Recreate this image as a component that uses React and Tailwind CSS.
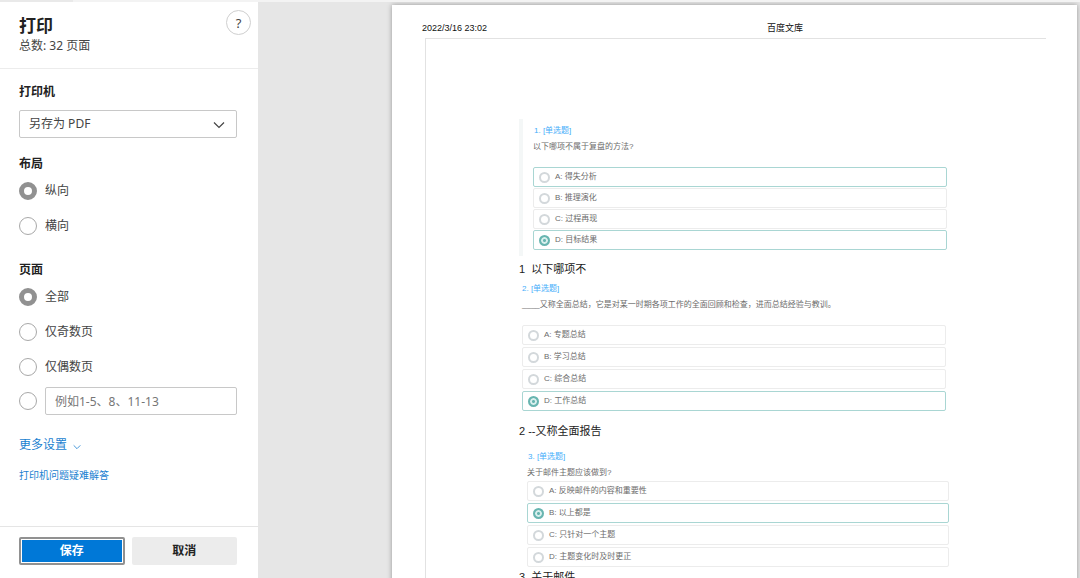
import React, { useState } from 'react';

const questions = [
  {
    id: 'q1',
    title: '1. [单选题]',
    text: '以下哪项不属于复盘的方法?',
    options: ['A: 得失分析', 'B: 推理演化', 'C: 过程再现', 'D: 目标结果'],
    answer: 3,
    outlined: [0, 3],
    box: 'border-l-4 border-[#f4f7f7] pt-1 pb-1.5 pl-[10px] pr-0.5',
    titleClass: 'pl-px',
    list: 'mt-3 gap-px',
    note: '1\u00a0 以下哪项不',
    noteClass: 'mt-[3px]',
  },
  {
    id: 'q2',
    title: '2. [单选题]',
    text: '____又称全面总结，它是对某一时期各项工作的全面回顾和检查，进而总结经验与教训。',
    options: ['A: 专题总结', 'B: 学习总结', 'C: 综合总结', 'D: 工作总结'],
    answer: 3,
    outlined: [3],
    box: 'mt-0.5 px-[3px]',
    titleClass: '',
    list: 'mt-3 gap-0.5',
    note: '2 --又称全面报告',
    noteClass: 'mt-[10px]',
  },
  {
    id: 'q3',
    title: '3. [单选题]',
    text: '关于邮件主题应该做到?',
    options: ['A: 反映邮件的内容和重要性', 'B: 以上都是', 'C: 只针对一个主题', 'D: 主题变化时及时更正'],
    answer: 1,
    outlined: [1],
    box: 'mt-2 pl-2',
    titleClass: 'pl-px',
    list: 'gap-0.5',
    note: '3\u00a0 关于邮件',
    noteClass: '',
  },
];

const pageOptions = [
  { value: 'all', label: '全部' },
  { value: 'odd', label: '仅奇数页' },
  { value: 'even', label: '仅偶数页' },
];

const radioClass =
  'size-[18px] shrink-0 appearance-none rounded-full border border-[#a8a8a8] bg-white checked:border-[5px] checked:border-[#919191]';

const Chevron = ({ className }) => (
  <svg className={className} viewBox="0 0 12 8" fill="none" stroke="currentColor" aria-hidden="true">
    <path d="M1 1.5L6 6.5L11 1.5" strokeWidth="1.2" />
  </svg>
);

const Radio = ({ name, label, checked, onChange }) => (
  <label className="flex h-[35px] items-center gap-2">
    <input type="radio" name={name} checked={checked} onChange={onChange} className={radioClass} />
    {label}
  </label>
);

const Question = ({ question }) => (
  <>
    <section className={question.box}>
      <h3 className={`text-[8px] leading-4 text-[#45aefa] ${question.titleClass}`}>{question.title}</h3>
      <p className="text-[8px] leading-4 text-[#6b6b6b]">{question.text}</p>
      <div className={`flex flex-col ${question.list}`}>
        {question.options.map((option, i) => (
          <label
            key={option}
            className={`flex h-5 items-center gap-[5px] rounded-xs border pl-[5px] text-[8px] text-[#6b6b6b] ${
              question.outlined.includes(i) ? 'border-[#a9d6d3]' : 'border-[#ececec]'
            }`}
          >
            <input
              type="radio"
              name={question.id}
              defaultChecked={i === question.answer}
              className="size-[11px] shrink-0 appearance-none rounded-full border-2 border-[#d3d8db] checked:border-[#68b5b0] checked:bg-[radial-gradient(circle,#68b5b0_1px,#d8efed_2px,#d8efed_3px,#68b5b0_4px)]"
            />
            {option}
          </label>
        ))}
      </div>
    </section>
    <p className={`text-[11px] leading-5 text-[#222222] ${question.noteClass}`}>{question.note}</p>
  </>
);

const PrintPanel = () => {
  const [layout, setLayout] = useState('portrait');
  const [pages, setPages] = useState('all');

  return (
    <aside className="flex w-[258px] shrink-0 flex-col bg-white text-xs text-[#444444]">
      <header className="flex items-start justify-between border-b border-[#ececec] pt-[14px] pr-[7px] pb-3 pl-[19px]">
        <div>
          <h1 className="text-[17px] leading-5 font-bold text-[#222222]">打印</h1>
          <p className="leading-5">总数: 32 页面</p>
        </div>
        <button
          type="button"
          aria-label="帮助"
          className="-mt-1.5 size-[25px] rounded-full border border-[#cfcfcf] text-[13px] leading-5"
        >
          ?
        </button>
      </header>

      <div className="pt-[13px] pr-[21px] pl-[19px]">
        <h2 className="leading-5 font-bold text-[#222222]">
          <label htmlFor="printer">打印机</label>
        </h2>
        <div className="relative mt-2">
          <select
            id="printer"
            className="block h-7 w-full appearance-none rounded-xs border border-[#c8c8c8] bg-white pl-[9px]"
          >
            <option>另存为 PDF</option>
          </select>
          <Chevron className="pointer-events-none absolute top-[11px] right-3 h-2 w-3" />
        </div>

        <fieldset className="mt-[17px] min-w-0">
          <legend className="leading-[18px] font-bold text-[#222222]">布局</legend>
          <Radio name="layout" label="纵向" checked={layout === 'portrait'} onChange={() => setLayout('portrait')} />
          <Radio name="layout" label="横向" checked={layout === 'landscape'} onChange={() => setLayout('landscape')} />
        </fieldset>

        <fieldset className="mt-[18px] min-w-0">
          <legend className="leading-[18px] font-bold text-[#222222]">页面</legend>
          {pageOptions.map(({ value, label }) => (
            <Radio key={value} name="pages" label={label} checked={pages === value} onChange={() => setPages(value)} />
          ))}
          <div className="flex h-[34px] items-center gap-2">
            <input
              type="radio"
              name="pages"
              aria-label="自定义页面"
              checked={pages === 'custom'}
              onChange={() => setPages('custom')}
              className={radioClass}
            />
            <input
              type="text"
              aria-label="页面范围"
              placeholder="例如1-5、8、11-13"
              onFocus={() => setPages('custom')}
              className="h-7 min-w-0 flex-1 rounded-xs border border-[#c8c8c8] px-[9px] placeholder:text-[#767676]"
            />
          </div>
        </fieldset>

        <button type="button" className="mt-[17px] flex items-center gap-1.5 leading-5 text-[#1a7fd0]">
          更多设置
          <Chevron className="mt-1 h-1.5 w-2" />
        </button>
        <a href="#help" className="mt-[10px] block text-[10px] leading-5 text-[#1a7fd0]">
          打印机问题疑难解答
        </a>
      </div>

      <footer className="mt-auto grid grid-cols-2 gap-[7px] border-t border-[#e5e5e5] pt-[10px] pr-[21px] pb-[13px] pl-[19px] font-bold">
        <button
          type="button"
          className="h-7 rounded-xs border-2 border-[#919191] bg-[#0078d7] text-white inset-ring inset-ring-white"
        >
          保存
        </button>
        <button type="button" className="h-7 rounded-xs bg-[#ececec] text-[#222222]">
          取消
        </button>
      </footer>
    </aside>
  );
};

const Preview = () => (
  <main className="min-w-0 flex-1 overflow-hidden bg-[#e6e6e6] pt-[3px] pr-[3px] pl-[134px]">
    <article className="min-h-full bg-white pt-[17px] pr-[31px] pl-[30px] shadow-[0_0_5px_rgba(0,0,0,0.35)]">
      <header className="relative flex justify-center text-[9px] leading-3 text-[#111111]">
        <time className="absolute left-0">2022/3/16 23:02</time>
        <h2 className="pl-[102px]">百度文库</h2>
      </header>
      <div className="mt-1 ml-[3px] border-t border-l border-[#e2e2e2] pt-20 pr-[97px] pl-[93px]">
        {questions.map((question) => (
          <Question key={question.id} question={question} />
        ))}
      </div>
    </article>
  </main>
);

const App = () => (
  <div className="flex h-screen flex-col overflow-hidden font-['Noto_Sans','Noto_Sans_CJK_SC',sans-serif]">
    <div className="flex h-0.5 shrink-0 bg-[#f3f3f3]">
      <div className="w-[73px] bg-[#e9e9e9]" />
    </div>
    <div className="flex min-h-0 flex-1">
      <PrintPanel />
      <div className="flex min-w-0 flex-1 font-['Liberation_Sans','Noto_Sans_CJK_SC',sans-serif]">
        <Preview />
      </div>
    </div>
  </div>
);

export default App;
